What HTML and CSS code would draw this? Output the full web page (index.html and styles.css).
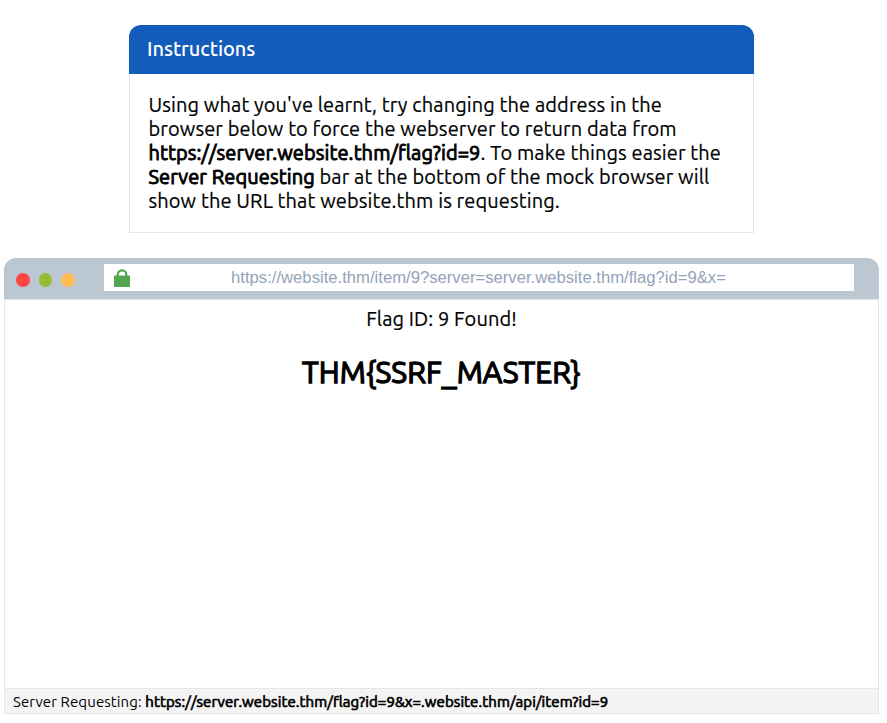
FILE: index.html
```html
<!DOCTYPE html>
<html lang="en">
<head>
<meta charset="utf-8">
<title>Instructions</title>
<link rel="stylesheet" href="styles.css">
</head>
<body>
<section class="card">
  <h1 class="card-title">Instructions</h1>
  <p class="card-body">
    <span class="line">Using what you've learnt, try changing the address in the</span>
    <span class="line">browser below to force the webserver to return data from</span>
    <span class="line"><b>https://server.website.thm/flag?id=9</b>. To make things easier the</span>
    <span class="line"><b>Server Requesting</b> bar at the bottom of the mock browser will</span>
    <span class="line">show the URL that website.thm is requesting.</span>
  </p>
</section>
<section class="browser">
  <header class="bar">
    <i class="dot red"></i><i class="dot green"></i><i class="dot amber"></i>
    <div class="address">
      <svg class="lock" width="16" height="18" viewBox="0 0 16 18"><path d="M3.7 8V5.6a4.3 4.3 0 0 1 8.6 0V8" fill="none" stroke="#50a750" stroke-width="2.2"/><rect y="6.4" width="16" height="11.6" rx=".8" fill="#50a750"/></svg>
      <span class="url">https://website.thm/item/9?server=server.website.thm/flag?id=9&amp;x=</span>
    </div>
  </header>
  <main class="page">
    <p class="found">Flag ID: 9 Found!</p>
    <h2 class="flag">THM{SSRF_MASTER}</h2>
  </main>
  <footer class="status">Server Requesting: <b>https://server.website.thm/flag?id=9&amp;x=.website.thm/api/item?id=9</b></footer>
</section>
</body>
</html>
```
FILE: styles.css
```css
* { box-sizing: border-box; }
body { margin: 0; padding: 25px 8px 0 4px; background: #fff; color: #000; font-family: Ubuntu, "Noto Sans", sans-serif; font-size: 20px; }
p, h1, h2 { margin: 0; }
b, .flag { font-weight: 400; -webkit-text-stroke: 0.9px #000; }
.card { width: 625px; margin-left: 125px; }
.card-title { height: 49px; padding-left: 18px; border-radius: 12px 12px 0 0; background: #135cbb; color: #fff; font-size: 20px; font-weight: 500; letter-spacing: -0.06px; line-height: 47px; }
.card-body { height: 159px; padding: 19px 18.5px 0; border: 1px solid #e6e6e6; border-top: 0; line-height: 24px; letter-spacing: 0.11px; -webkit-text-stroke: 0.2px #000; }
.line { display: block; white-space: pre; }
.browser { width: 875px; margin-top: 25px; }
.bar { display: flex; align-items: center; height: 41px; padding: 0 25px 0 12px; border-radius: 12px 12px 0 0; background: #bbc7d1; }
.dot { width: 14px; height: 14px; margin: 3px 9px 0 0; border-radius: 50%; }
.red { background: #ff4444; }
.green { width: 13px; background: #99bb33; }
.amber { background: #ffbb55; }
.address { display: flex; align-items: center; width: 750px; height: 27px; margin: -2px 0 0 auto; padding: 0 27px 0 10px; background: #fff; }
.lock { margin-top: 1px; }
.url { flex: 1; text-align: center; color: #94a3b8; font: 16.67px "Liberation Sans", sans-serif; }
.page { height: 389px; border: 1px solid #e6e6e6; border-bottom: 0; text-align: center; }
.found { padding-top: 7px; line-height: 24px; letter-spacing: 0.1px; -webkit-text-stroke: 0.2px #000; }
.flag { margin-top: 23px; font-size: 30px; line-height: 36px; letter-spacing: 0.08px; -webkit-text-stroke-width: 1.3px; }
.status { height: 26px; padding-left: 8px; border: 1px solid #e6e6e6; background: #f4f4f4; font-size: 15px; line-height: 26px; letter-spacing: 0.1px; white-space: pre; }
.status b { -webkit-text-stroke-width: 0.7px; }
```
